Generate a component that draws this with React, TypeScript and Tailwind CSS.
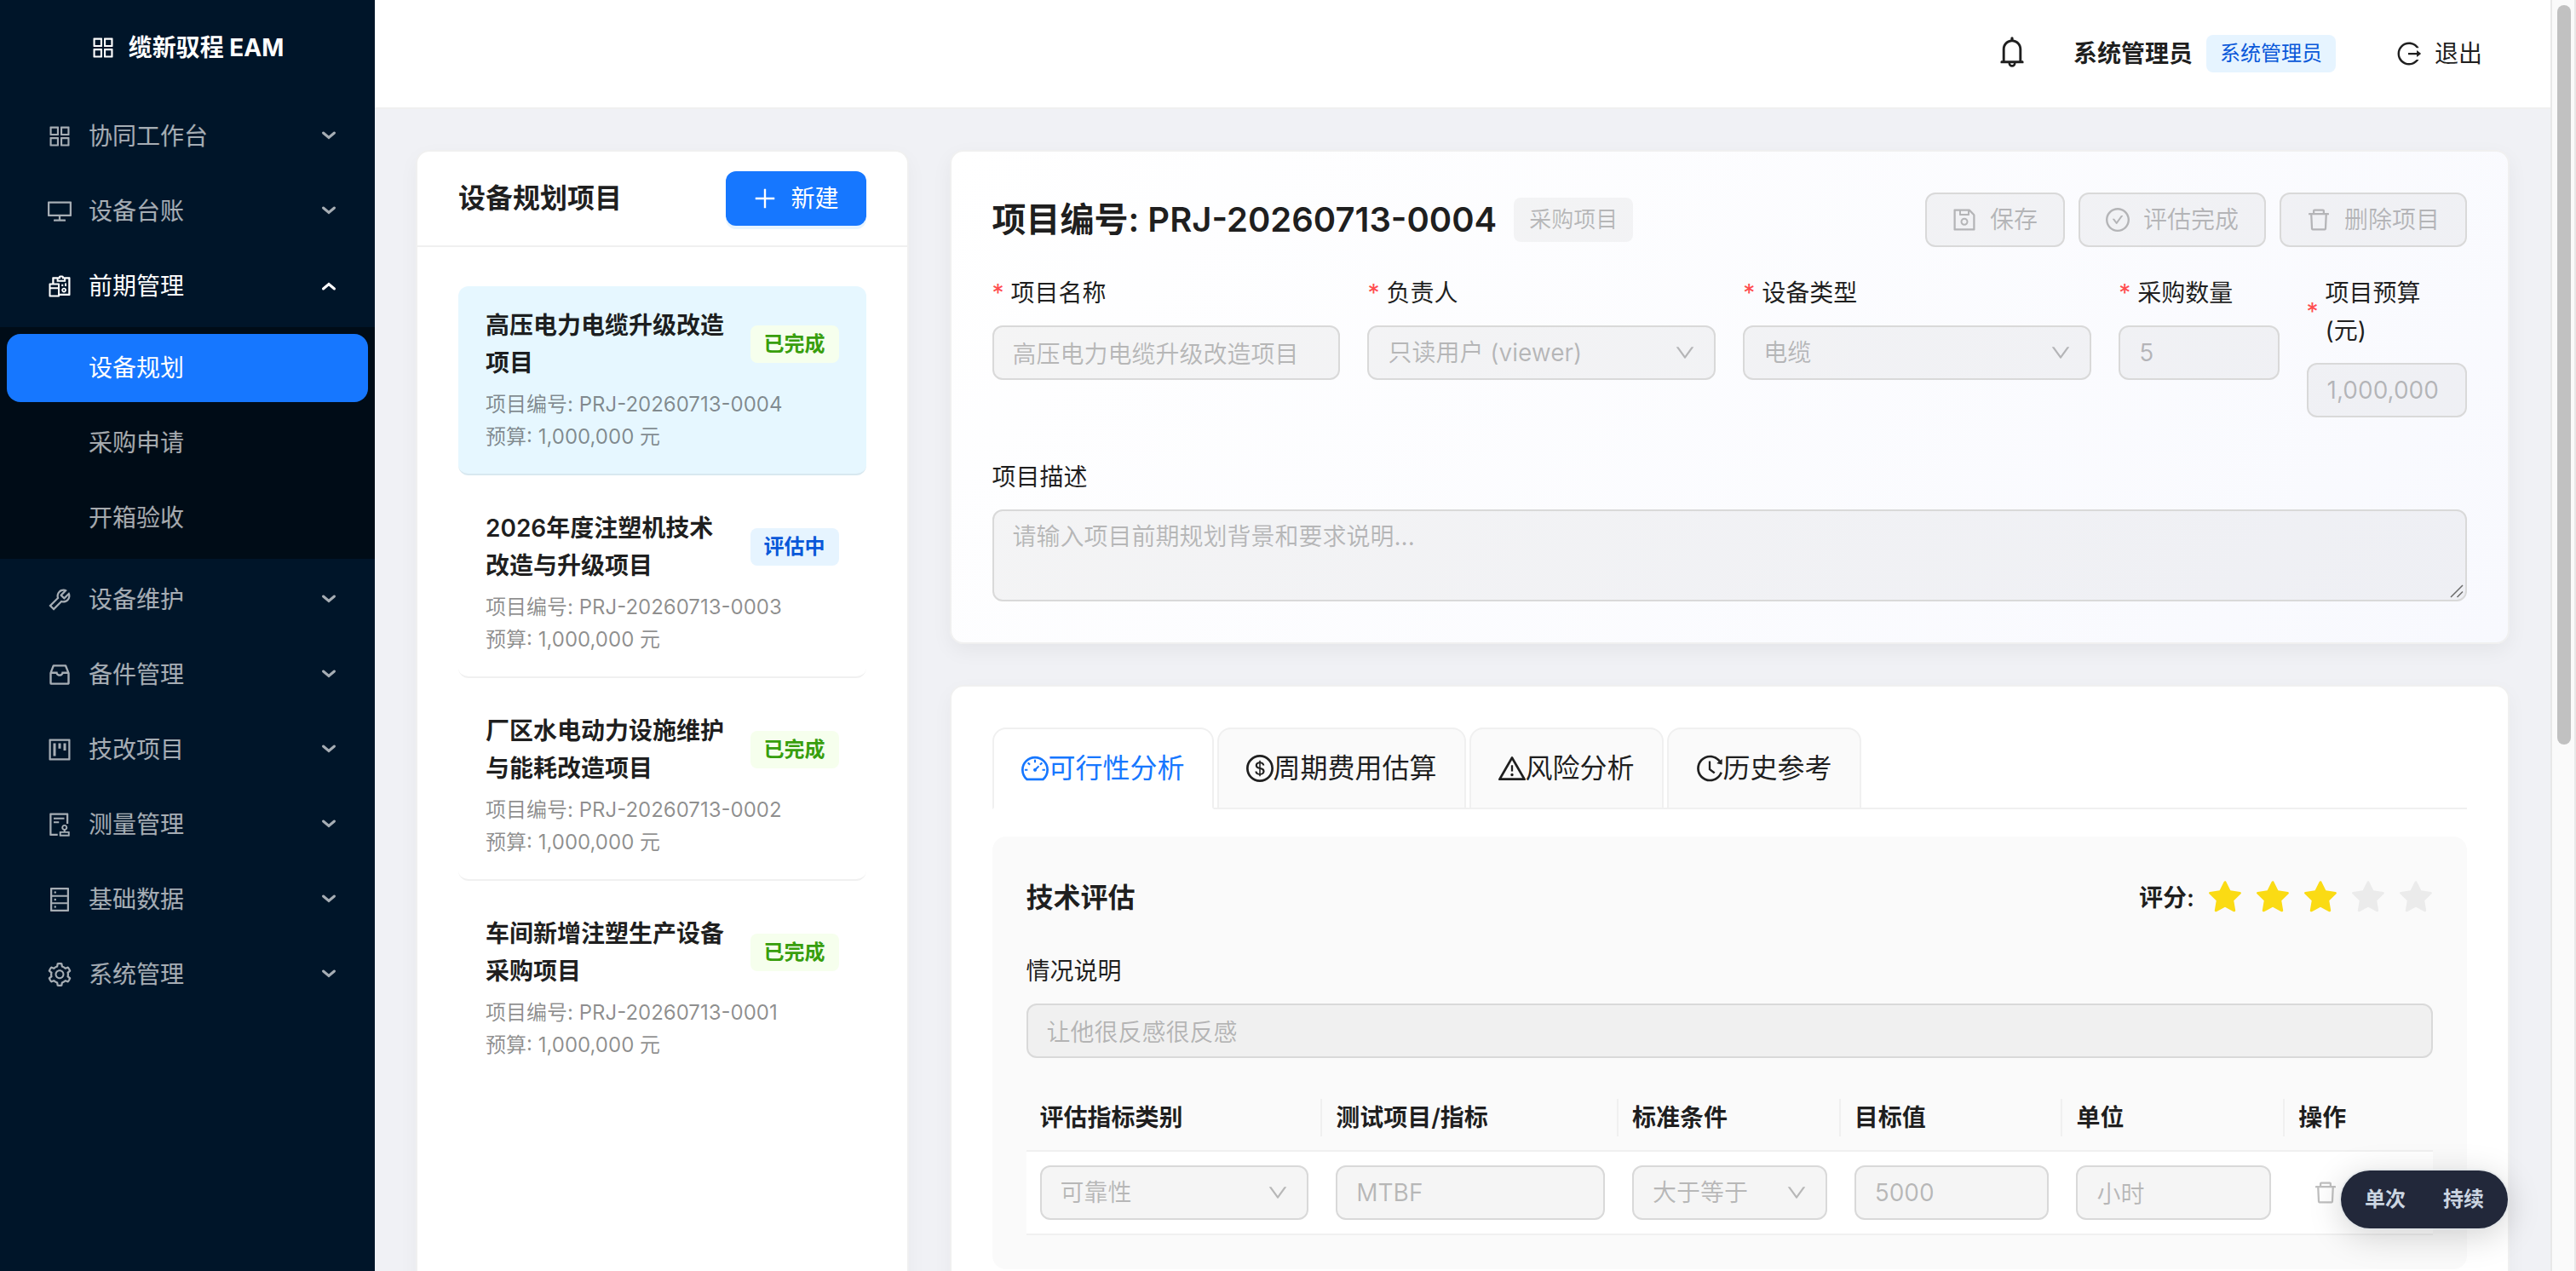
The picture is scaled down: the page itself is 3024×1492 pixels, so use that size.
import React, { useState } from 'react';
import {
  AiFillStar,
  AiOutlineAppstore,
  AiOutlineAudit,
  AiOutlineBell,
  AiOutlineCheckCircle,
  AiOutlineDashboard,
  AiOutlineDatabase,
  AiOutlineDelete,
  AiOutlineDesktop,
  AiOutlineDollarCircle,
  AiOutlineDown,
  AiOutlineHistory,
  AiOutlineInbox,
  AiOutlineLogout,
  AiOutlinePlus,
  AiOutlineProject,
  AiOutlineReconciliation,
  AiOutlineSave,
  AiOutlineSetting,
  AiOutlineTool,
  AiOutlineWarning,
} from 'react-icons/ai';
import type { IconType } from 'react-icons';

interface MenuEntry {
  label: string;
  icon: IconType;
  children?: string[];
}

interface Project {
  code: string;
  name: string;
  budget: string;
  status: 'done' | 'evaluating';
}

const menu: MenuEntry[] = [
  { label: '协同工作台', icon: AiOutlineAppstore },
  { label: '设备台账', icon: AiOutlineDesktop },
  { label: '前期管理', icon: AiOutlineReconciliation, children: ['设备规划', '采购申请', '开箱验收'] },
  { label: '设备维护', icon: AiOutlineTool },
  { label: '备件管理', icon: AiOutlineInbox },
  { label: '技改项目', icon: AiOutlineProject },
  { label: '测量管理', icon: AiOutlineAudit },
  { label: '基础数据', icon: AiOutlineDatabase },
  { label: '系统管理', icon: AiOutlineSetting },
];

const projects: Project[] = [
  { code: 'PRJ-20260713-0004', name: '高压电力电缆升级改造项目', budget: '1,000,000', status: 'done' },
  { code: 'PRJ-20260713-0003', name: '2026年度注塑机技术改造与升级项目', budget: '1,000,000', status: 'evaluating' },
  { code: 'PRJ-20260713-0002', name: '厂区水电动力设施维护与能耗改造项目', budget: '1,000,000', status: 'done' },
  { code: 'PRJ-20260713-0001', name: '车间新增注塑生产设备采购项目', budget: '1,000,000', status: 'done' },
];

const tabs: { label: string; icon: IconType }[] = [
  { label: '可行性分析', icon: AiOutlineDashboard },
  { label: '周期费用估算', icon: AiOutlineDollarCircle },
  { label: '风险分析', icon: AiOutlineWarning },
  { label: '历史参考', icon: AiOutlineHistory },
];

const Icon = ({ as: Glyph, className = 'size-7' }: { as: IconType; className?: string }) => (
  <Glyph viewBox="64 64 896 896" className={`shrink-0 ${className}`} aria-hidden="true" />
);

const Arrow = ({ open }: { open?: boolean }) => (
  <svg viewBox="0 0 20 20" className="size-5 shrink-0" fill="none" stroke="currentColor" strokeWidth="3" strokeLinecap="round" aria-hidden="true">
    <path d={open ? 'M3.5 13 L10 7.5 L16.5 13' : 'M3.5 6 L10 11.5 L16.5 6'} />
  </svg>
);

const fieldClass =
  'block h-16 w-full rounded-xl border-2 border-[#d9d9d9] bg-black/4 px-[22px] text-[28px] leading-[44px] text-black/25';

const SelectField = ({ id, value, label }: { id: string; value: string; label?: string }) => (
  <div className="relative">
    <select id={id} aria-label={label} disabled className={`${fieldClass} appearance-none opacity-100`}>
      <option>{value}</option>
    </select>
    <AiOutlineDown
      viewBox="64 64 896 896"
      aria-hidden="true"
      className="pointer-events-none absolute inset-y-0 right-6 my-auto size-6 text-black/25"
    />
  </div>
);

const FormItem = ({
  id,
  label,
  className,
  children,
}: {
  id: string;
  label: string;
  className: string;
  children: React.ReactNode;
}) => (
  <div className={className}>
    <label htmlFor={id} className="mb-4 flex items-center leading-[44px]">
      <span className="mr-2 w-3.5 text-[#ff4d4f]">*</span>
      <span className="pr-4">{label}</span>
    </label>
    {children}
  </div>
);

const ActionButton = ({ icon, children }: { icon: IconType; children: React.ReactNode }) => (
  <button
    type="button"
    disabled
    className="flex h-16 items-center gap-4 rounded-xl border-2 border-[#d9d9d9] bg-black/4 px-[30px] text-black/25"
  >
    <Icon as={icon} />
    {children}
  </button>
);

const Sidebar = () => (
  <aside className="flex w-[440px] shrink-0 flex-col bg-[#001529] text-white/65">
    <div className="flex h-28 items-center justify-center gap-4 font-bold text-white">
      <Icon as={AiOutlineAppstore} />
      <span>缆新驭程 EAM</span>
    </div>
    <nav className="flex flex-col gap-2 pt-2">
      {menu.map((item) => (
        <div key={item.label}>
          <button
            type="button"
            className={`flex h-20 w-full items-center gap-5 pr-11 pl-14 ${item.children ? 'text-white' : ''}`}
          >
            <Icon as={item.icon} />
            <span className="flex-1 text-left">{item.label}</span>
            <Arrow open={!!item.children} />
          </button>
          {item.children && (
            <div className="mt-2 flex flex-col gap-2 bg-[#000c17] p-2">
              {item.children.map((child, index) => (
                <a
                  key={child}
                  href="#"
                  className={`flex h-20 items-center rounded-2xl pl-24 ${index === 0 ? 'bg-[#1677ff] text-white' : ''}`}
                >
                  {child}
                </a>
              ))}
            </div>
          )}
        </div>
      ))}
    </nav>
  </aside>
);

const Header = () => (
  <header className="flex h-32 items-center justify-end border-b-2 border-[#f0f0f0] bg-white pr-12">
    <button type="button" aria-label="通知" className="mr-10 flex size-16 justify-center pt-3">
      <Icon as={AiOutlineBell} className="size-9" />
    </button>
    <span className="mr-4 font-semibold">系统管理员</span>
    <span className="mr-10 rounded-lg bg-[#e6f4ff] px-4 text-2xl leading-[44px] text-[#0958d9]">系统管理员</span>
    <button type="button" className="flex h-16 items-center gap-4 px-8">
      <Icon as={AiOutlineLogout} />
      退出
    </button>
  </header>
);

const ProjectList = () => {
  const [selected, setSelected] = useState(projects[0].code);

  return (
    <section className="col-span-6 rounded-2xl border-2 border-[#f0f0f0] bg-white shadow-[0_8px_24px_rgba(0,0,0,0.04)]">
      <div className="-mb-0.5 flex h-28 items-center justify-between border-b-2 border-[#f0f0f0] px-12">
        <h2 className="text-[32px] font-semibold">设备规划项目</h2>
        <button
          type="button"
          className="flex h-16 items-center gap-4 rounded-xl bg-[#1677ff] px-8 text-white shadow-[0_4px_0_rgba(5,145,255,0.1)]"
        >
          <Icon as={AiOutlinePlus} />
          新建
        </button>
      </div>
      <ul className="flex flex-col gap-4 p-12">
        {projects.map((project) => (
          <li
            key={project.code}
            onClick={() => setSelected(project.code)}
            className={`cursor-pointer rounded-xl border-b-2 border-black/6 px-8 py-6 last:border-b-0 ${
              selected === project.code ? 'bg-[#e6f7ff]' : ''
            }`}
          >
            <div className="mb-2 flex items-center justify-between gap-7">
              <h3 className="leading-[44px] font-semibold">{project.name}</h3>
              {project.status === 'done' ? (
                <span className="shrink-0 rounded-lg bg-[#f6ffed] px-4 text-2xl leading-[44px] font-semibold text-[#389e0d]">
                  已完成
                </span>
              ) : (
                <span className="shrink-0 rounded-lg bg-[#e6f4ff] px-4 text-2xl leading-[44px] font-semibold text-[#0958d9]">
                  评估中
                </span>
              )}
            </div>
            <div className="text-2xl leading-[38px] text-black/45">
              <div>项目编号: {project.code}</div>
              <div>预算: {project.budget} 元</div>
            </div>
          </li>
        ))}
      </ul>
    </section>
  );
};

const ProjectForm = () => (
  <section className="rounded-2xl border-2 border-[#f0f0f0] bg-linear-135 from-white to-[#f8f9fe] p-12 shadow-[0_8px_24px_rgba(0,0,0,0.05)]">
    <div className="mb-8 flex items-center justify-between">
      <div className="flex items-center gap-5">
        <h1 className="text-[40px] font-semibold">项目编号: PRJ-20260713-0004</h1>
        <span className="rounded-lg bg-black/4 px-[18px] text-[26px] leading-[52px] text-black/25">采购项目</span>
      </div>
      <div className="flex gap-4">
        <ActionButton icon={AiOutlineSave}>保存</ActionButton>
        <ActionButton icon={AiOutlineCheckCircle}>评估完成</ActionButton>
        <ActionButton icon={AiOutlineDelete}>删除项目</ActionButton>
      </div>
    </div>

    <div className="mb-12 grid grid-cols-24 gap-8">
      <FormItem id="name" label="项目名称" className="col-span-6">
        <input id="name" disabled defaultValue="高压电力电缆升级改造项目" className={fieldClass} />
      </FormItem>
      <FormItem id="owner" label="负责人" className="col-span-6">
        <SelectField id="owner" value="只读用户 (viewer)" />
      </FormItem>
      <FormItem id="type" label="设备类型" className="col-span-6">
        <SelectField id="type" value="电缆" />
      </FormItem>
      <FormItem id="quantity" label="采购数量" className="col-span-3">
        <input id="quantity" disabled defaultValue="5" className={fieldClass} />
      </FormItem>
      <FormItem id="budget" label="项目预算 (元)" className="col-span-3">
        <input id="budget" disabled defaultValue="1,000,000" className={fieldClass} />
      </FormItem>
    </div>

    <label htmlFor="description" className="mb-4 block leading-[44px]">
      项目描述
    </label>
    <div className="relative">
      <textarea
        id="description"
        disabled
        placeholder="请输入项目前期规划背景和要求说明..."
        className="block h-[108px] w-full resize-none rounded-xl border-2 border-[#d9d9d9] bg-black/4 px-[22px] py-2 leading-[44px] placeholder:text-black/25"
      />
      <svg viewBox="0 0 16 16" className="absolute right-1 bottom-1 size-4" stroke="#6b6b6b" strokeWidth="1.5" aria-hidden="true">
        <path d="M1 15 L15 1 M8.5 15 L15 8.5" />
      </svg>
    </div>
  </section>
);

const headers = [
  { title: '评估指标类别', width: 'w-[20%]' },
  { title: '测试项目/指标', width: 'w-[20%]' },
  { title: '标准条件', width: 'w-[15%]' },
  { title: '目标值', width: 'w-[15%]' },
  { title: '单位', width: 'w-[15%]' },
  { title: '操作', width: 'w-[10%]' },
];

const TechnicalEvaluation = () => (
  <div className="rounded-2xl bg-[#fafafa] p-10">
    <div className="mb-8 flex h-16 items-center justify-between">
      <h2 className="text-[32px] font-semibold">技术评估</h2>
      <div className="flex items-center gap-4">
        <span className="font-semibold">评分:</span>
        <div className="flex gap-4" role="img" aria-label="3 / 5">
          {[1, 2, 3, 4, 5].map((n) => (
            <Icon key={n} as={AiFillStar} className={n <= 3 ? 'size-10 text-[#fadb14]' : 'size-10 text-black/6'} />
          ))}
        </div>
      </div>
    </div>

    <label htmlFor="remark" className="mb-4 block leading-[44px]">
      情况说明
    </label>
    <input id="remark" disabled defaultValue="让他很反感很反感" className={fieldClass} />

    <table className="mt-8 w-full table-fixed border-separate border-spacing-0 text-left">
      <thead>
        <tr>
          {headers.map((header) => (
            <th key={header.title} className={`border-b-2 border-[#f0f0f0] py-4 font-semibold ${header.width}`}>
              <div
                className={`px-4 leading-[44px] ${header.title === '操作' ? '' : 'border-r-2 border-[#f0f0f0]'}`}
              >
                {header.title}
              </div>
            </th>
          ))}
        </tr>
      </thead>
      <tbody>
        <tr className="bg-white *:border-b-2 *:border-[#f0f0f0] *:p-4">
          <td>
            <SelectField id="metric-category" label="评估指标类别" value="可靠性" />
          </td>
          <td>
            <input aria-label="测试项目/指标" disabled defaultValue="MTBF" className={fieldClass} />
          </td>
          <td>
            <SelectField id="metric-operator" label="标准条件" value="大于等于" />
          </td>
          <td>
            <input aria-label="目标值" disabled defaultValue="5000" className={fieldClass} />
          </td>
          <td>
            <input aria-label="单位" disabled defaultValue="小时" className={fieldClass} />
          </td>
          <td>
            <button type="button" disabled aria-label="删除" className="flex h-12 items-center px-[18px] text-black/25">
              <Icon as={AiOutlineDelete} />
            </button>
          </td>
        </tr>
      </tbody>
    </table>
  </div>
);

const AnalysisCard = () => {
  const [active, setActive] = useState(0);

  return (
    <section className="rounded-2xl border-2 border-[#f0f0f0] bg-white p-12 shadow-[0_8px_24px_rgba(0,0,0,0.04)]">
      <div role="tablist" className="mb-8 flex gap-1 border-b-2 border-[#f0f0f0] text-[32px]">
        {tabs.map((tab, index) => (
          <button
            key={tab.label}
            type="button"
            role="tab"
            aria-selected={active === index}
            onClick={() => setActive(index)}
            className={`-mb-0.5 flex h-24 items-center rounded-t-2xl border-2 border-[#f0f0f0] px-8 ${
              active === index ? 'border-b-white bg-white text-[#1677ff]' : 'bg-[#fafafa]'
            }`}
          >
            <Icon as={tab.icon} className="size-8" />
            {tab.label}
          </button>
        ))}
      </div>
      <TechnicalEvaluation />
    </section>
  );
};

export default function App() {
  return (
    <div className="relative flex h-screen overflow-hidden bg-[#f0f1f5] font-[Inter,'Noto_Sans_CJK_SC',sans-serif] text-[28px] text-black/88">
      <Sidebar />
      <div className="min-w-0 flex-1">
        <Header />
        <main className="grid grid-cols-24 gap-12 p-12">
          <ProjectList />
          <div className="col-span-18 flex flex-col gap-12">
            <ProjectForm />
            <AnalysisCard />
          </div>
        </main>
      </div>

      {/* scroll track */}
      <div className="w-[30px] shrink-0 border-x-2 border-[#e8e8e8] bg-[#fafafa] px-1.5 pt-1.5">
        <div className="h-[868px] w-4 rounded-full bg-[#c1c1c1]" />
      </div>

      <div className="absolute right-20 bottom-[50px] flex h-[68px] items-center gap-11 rounded-full bg-[#22283a] px-7 text-2xl font-bold text-[#cbd5e1] shadow-[0_8px_40px_rgba(0,0,0,0.18)] ring-2 ring-[#dfe4e8]/60">
        <button type="button">单次</button>
        <button type="button">持续</button>
      </div>
    </div>
  );
}
